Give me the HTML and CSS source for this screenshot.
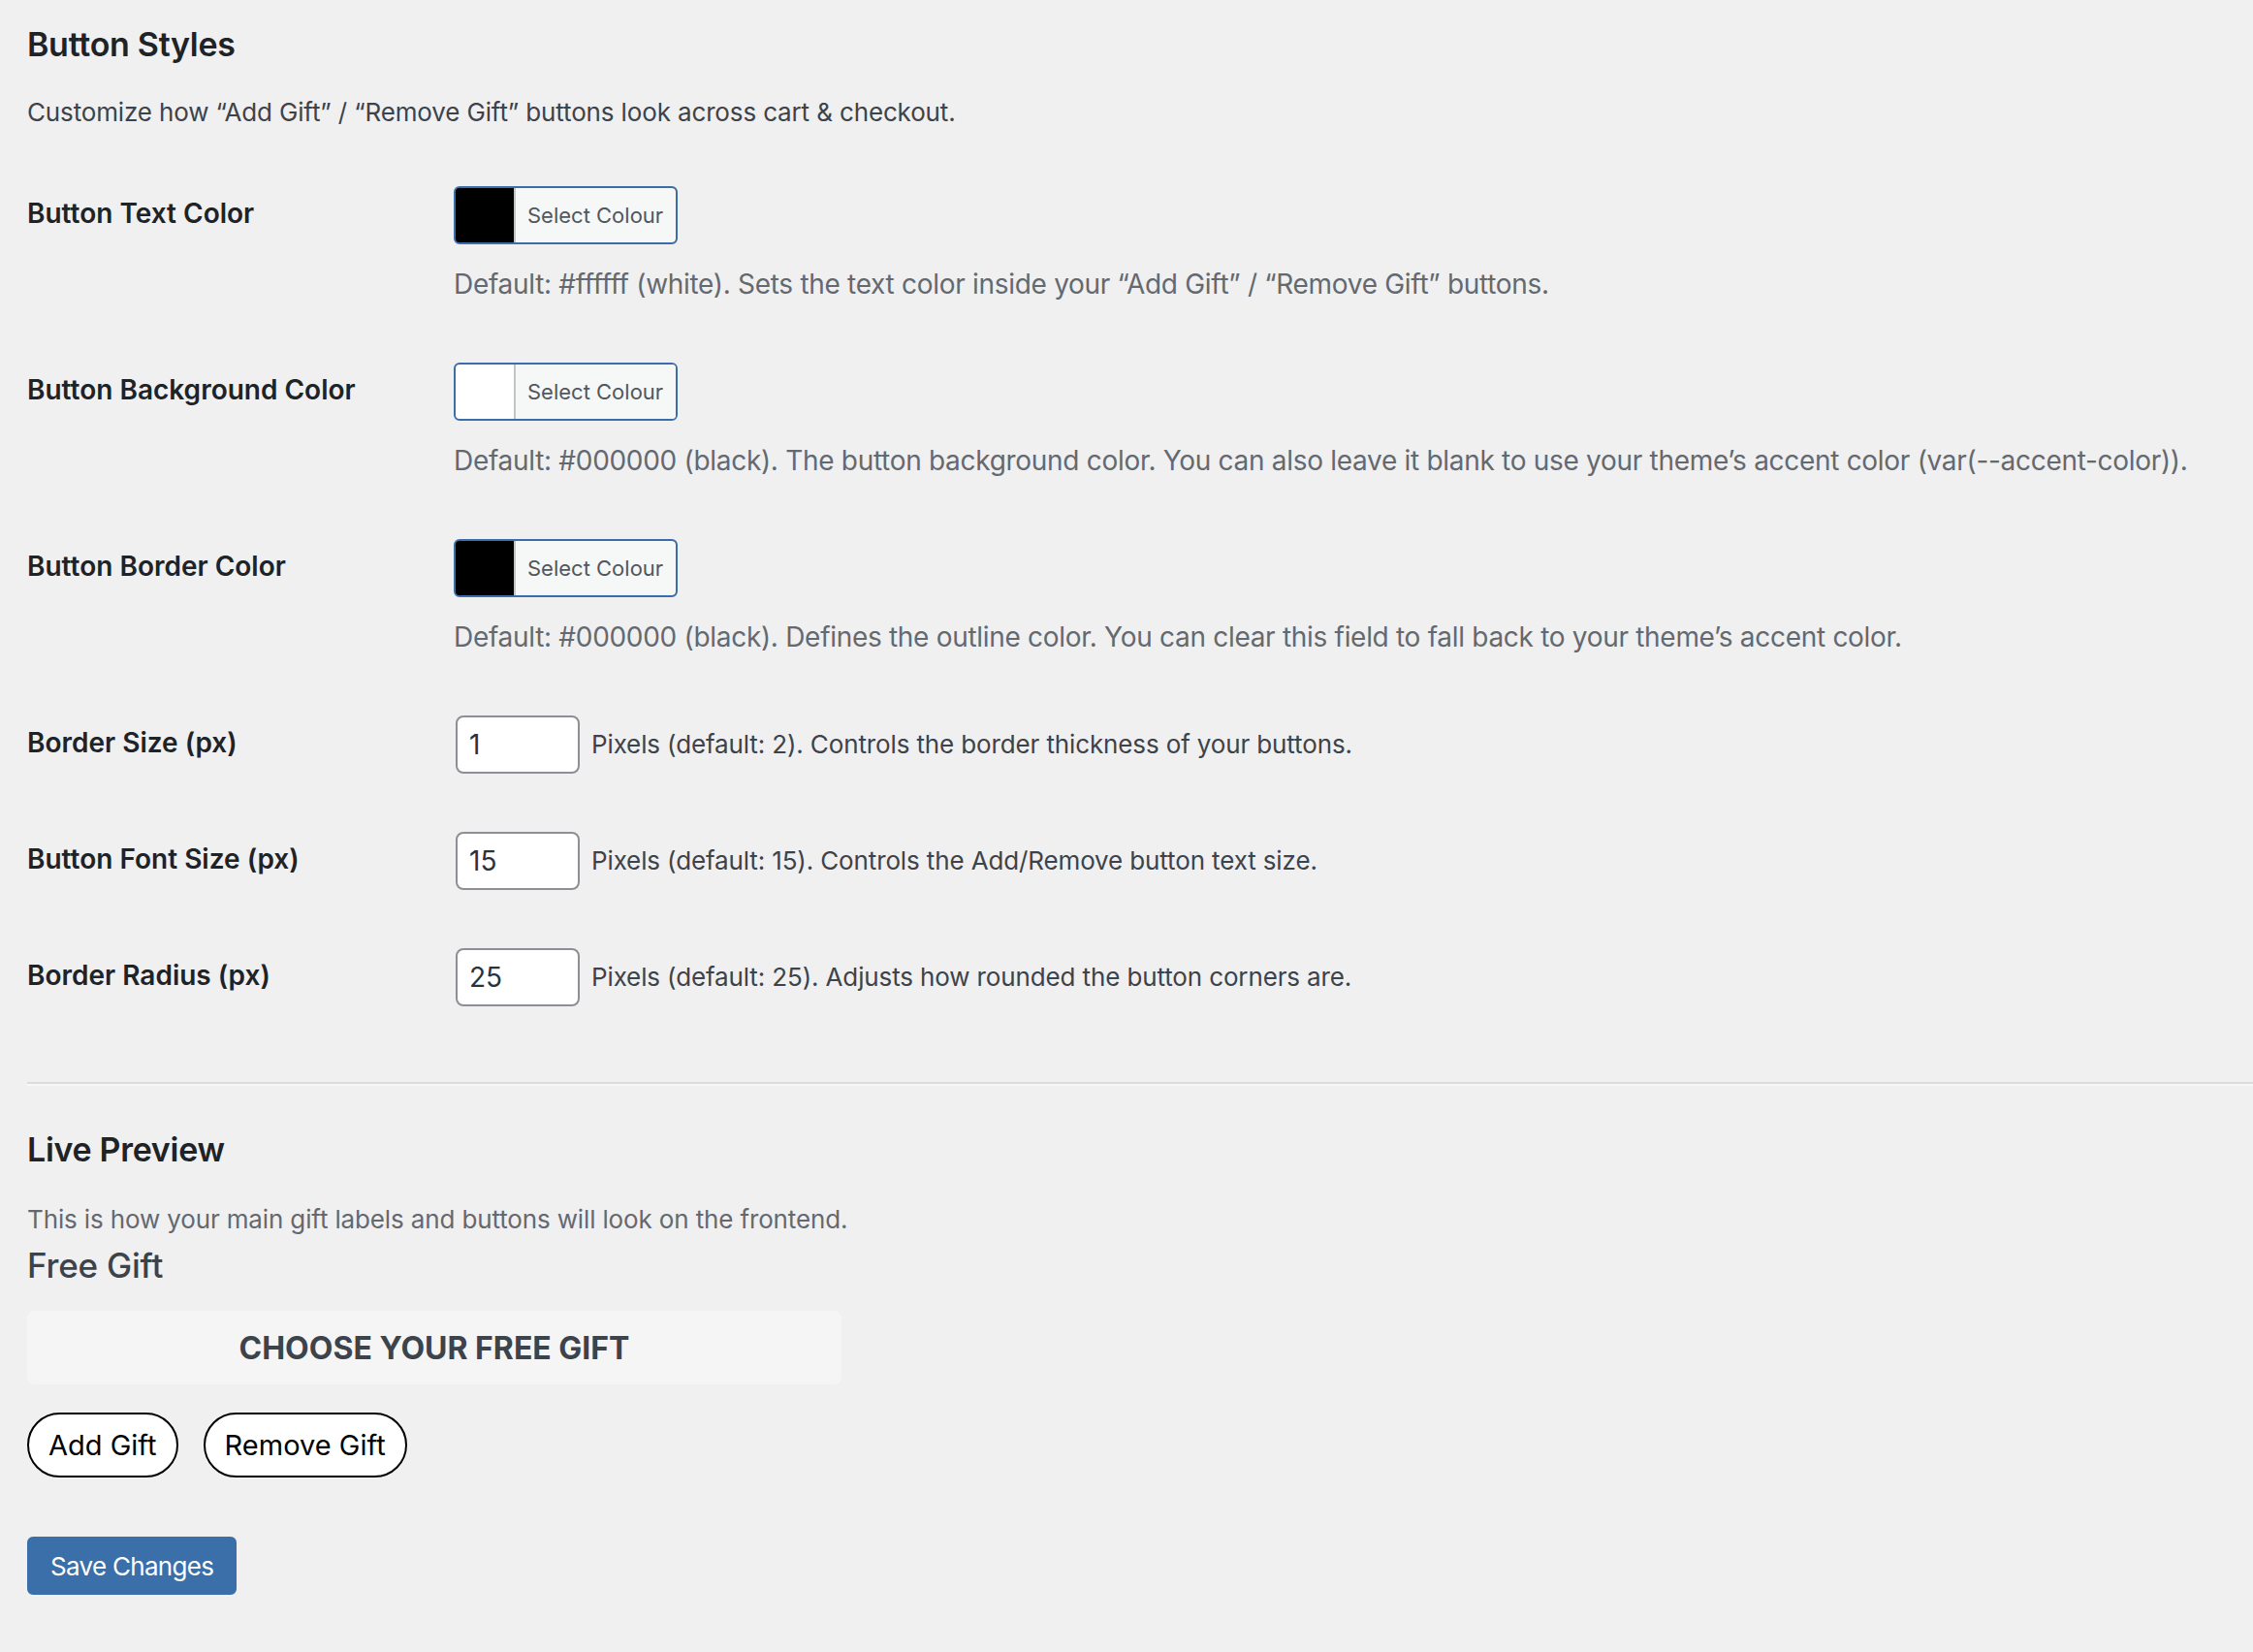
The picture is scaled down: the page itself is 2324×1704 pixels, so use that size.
FILE: index.html
```html
<!DOCTYPE html>
<html lang="en">
<head>
<meta charset="utf-8">
<title>Button Styles</title>
<link rel="stylesheet" href="styles.css">
</head>
<body>
<div class="wrap">
  <h2 class="section-title">Button Styles</h2>
  <p class="intro">Customize how “Add Gift” / “Remove Gift” buttons look across cart &amp; checkout.</p>

  <table class="form-table">
    <tbody>
      <tr>
        <th scope="row">Button Text Color</th>
        <td>
          <button type="button" class="color-result swatch-black"><span class="color-result-text">Select Colour</span></button>
          <p class="description">Default: #ffffff (white). Sets the text color inside your “Add Gift” / “Remove Gift” buttons.</p>
        </td>
      </tr>
      <tr>
        <th scope="row">Button Background Color</th>
        <td>
          <button type="button" class="color-result swatch-white"><span class="color-result-text">Select Colour</span></button>
          <p class="description">Default: #000000 (black). The button background color. You can also leave it blank to use your theme’s accent color (var(--accent-color)).</p>
        </td>
      </tr>
      <tr>
        <th scope="row">Button Border Color</th>
        <td>
          <button type="button" class="color-result swatch-black"><span class="color-result-text">Select Colour</span></button>
          <p class="description">Default: #000000 (black). Defines the outline color. You can clear this field to fall back to your theme’s accent color.</p>
        </td>
      </tr>
      <tr>
        <th scope="row">Border Size (px)</th>
        <td>
          <div class="num-field">
            <input class="small-text" type="text" value="1">
            <span class="hint">Pixels (default: 2). Controls the border thickness of your buttons.</span>
          </div>
        </td>
      </tr>
      <tr>
        <th scope="row">Button Font Size (px)</th>
        <td>
          <div class="num-field">
            <input class="small-text" type="text" value="15">
            <span class="hint">Pixels (default: 15). Controls the Add/Remove button text size.</span>
          </div>
        </td>
      </tr>
      <tr>
        <th scope="row">Border Radius (px)</th>
        <td>
          <div class="num-field">
            <input class="small-text" type="text" value="25">
            <span class="hint">Pixels (default: 25). Adjusts how rounded the button corners are.</span>
          </div>
        </td>
      </tr>
    </tbody>
  </table>

  <hr class="divider">

  <h2 class="section-title preview-title">Live Preview</h2>
  <p class="preview-desc">This is how your main gift labels and buttons will look on the frontend.</p>
  <div class="free-gift">Free Gift</div>
  <div class="gift-banner">Choose your free gift</div>
  <div class="gift-actions">
    <button type="button" class="gift-btn">Add Gift</button>
    <button type="button" class="gift-btn">Remove Gift</button>
  </div>

  <div class="submit">
    <button type="submit" class="button-primary">Save Changes</button>
  </div>
</div>
</body>
</html>
```

FILE: styles.css
```css
* { box-sizing: border-box; }

html, body {
  margin: 0;
  padding: 0;
}

body {
  background: #f0f0f1;
  font-family: Inter, "Noto Sans", "Liberation Sans", sans-serif;
  color: #3c434a;
  width: 2324px;
  min-height: 1704px;
  overflow: hidden;
}

.wrap {
  padding: 24px 0 0 28px;
}

.section-title {
  margin: 0;
  font-size: 34px;
  line-height: 44px;
  font-weight: 600;
  letter-spacing: -0.3px;
  color: #1d2327;
}

.intro {
  margin: 28px 0 0;
  font-size: 26px;
  line-height: 40px;
  letter-spacing: -0.14px;
  color: #3c434a;
}

.form-table {
  margin-top: 26px;
  border-collapse: collapse;
  border-spacing: 0;
  width: 100%;
}

.form-table th {
  width: 420px;
  padding: 40px 20px 40px 0;
  vertical-align: top;
  text-align: left;
  font-size: 28px;
  line-height: 36px;
  font-weight: 600;
  color: #1d2327;
}

.form-table td {
  padding: 30px 20px;
  vertical-align: top;
  font-size: 28px;
  line-height: 42px;
}

.color-result {
  display: flex;
  align-items: stretch;
  height: 60px;
  padding: 0 0 0 60px;
  margin: 0;
  border: 2px solid #3b6ea8;
  border-radius: 6px;
  font-family: inherit;
  cursor: pointer;
  overflow: hidden;
}

.swatch-black { background: #000000; }
.swatch-white { background: #ffffff; }

.color-result-text {
  display: flex;
  align-items: center;
  padding: 0 13px 0 12px;
  background: #f6f7f7;
  border-left: 2px solid #c3c4c7;
  color: #50575e;
  font-size: 22px;
}

.description {
  margin: 20px 0 0;
  color: #646970;
  font-size: 28px;
  line-height: 42px;
  letter-spacing: -0.3px;
  white-space: nowrap;
}

.num-field {
  display: flex;
  align-items: center;
  gap: 12px;
}

.small-text {
  width: 128px;
  height: 60px;
  margin: 0 0 0 2px;
  padding: 0 12px;
  border: 2px solid #8c8f94;
  border-radius: 8px;
  background: #ffffff;
  color: #2c3338;
  font-family: inherit;
  font-size: 28px;
}

.hint {
  color: #3c434a;
  font-size: 26px;
  letter-spacing: -0.13px;
  white-space: nowrap;
}

.divider {
  margin: 48px 0 0;
  height: 0;
  border: 0;
  border-top: 2px solid #dcdcde;
  border-bottom: 2px solid #f6f7f7;
}

.preview-title {
  margin-top: 44px;
}

.preview-desc {
  margin: 30px 0 0;
  font-size: 26px;
  line-height: 40px;
  letter-spacing: -0.14px;
  color: #646970;
}

.free-gift {
  margin-top: 7px;
  font-size: 35px;
  line-height: 40px;
  font-weight: 500;
  letter-spacing: -0.2px;
  color: #3c434a;
}

.gift-banner {
  margin-top: 27px;
  width: 840px;
  height: 76px;
  display: flex;
  align-items: center;
  justify-content: center;
  background: #f5f5f5;
  border-radius: 8px;
  font-size: 32px;
  font-weight: 700;
  text-transform: uppercase;
  color: #3c434a;
}

.gift-actions {
  margin-top: 29px;
  display: flex;
  gap: 26px;
}

.gift-btn {
  padding: 13px 20px;
  border: 2px solid #000000;
  border-radius: 50px;
  background: #ffffff;
  color: #000000;
  font-family: inherit;
  font-size: 29px;
  line-height: 37px;
  cursor: pointer;
}

.submit {
  margin-top: 61px;
}

.button-primary {
  height: 60px;
  padding: 0 22px;
  border: 2px solid #3a6fa9;
  border-radius: 6px;
  background: #3a6fa9;
  color: #ffffff;
  font-family: inherit;
  font-size: 26px;
  letter-spacing: -0.7px;
  cursor: pointer;
}
```
